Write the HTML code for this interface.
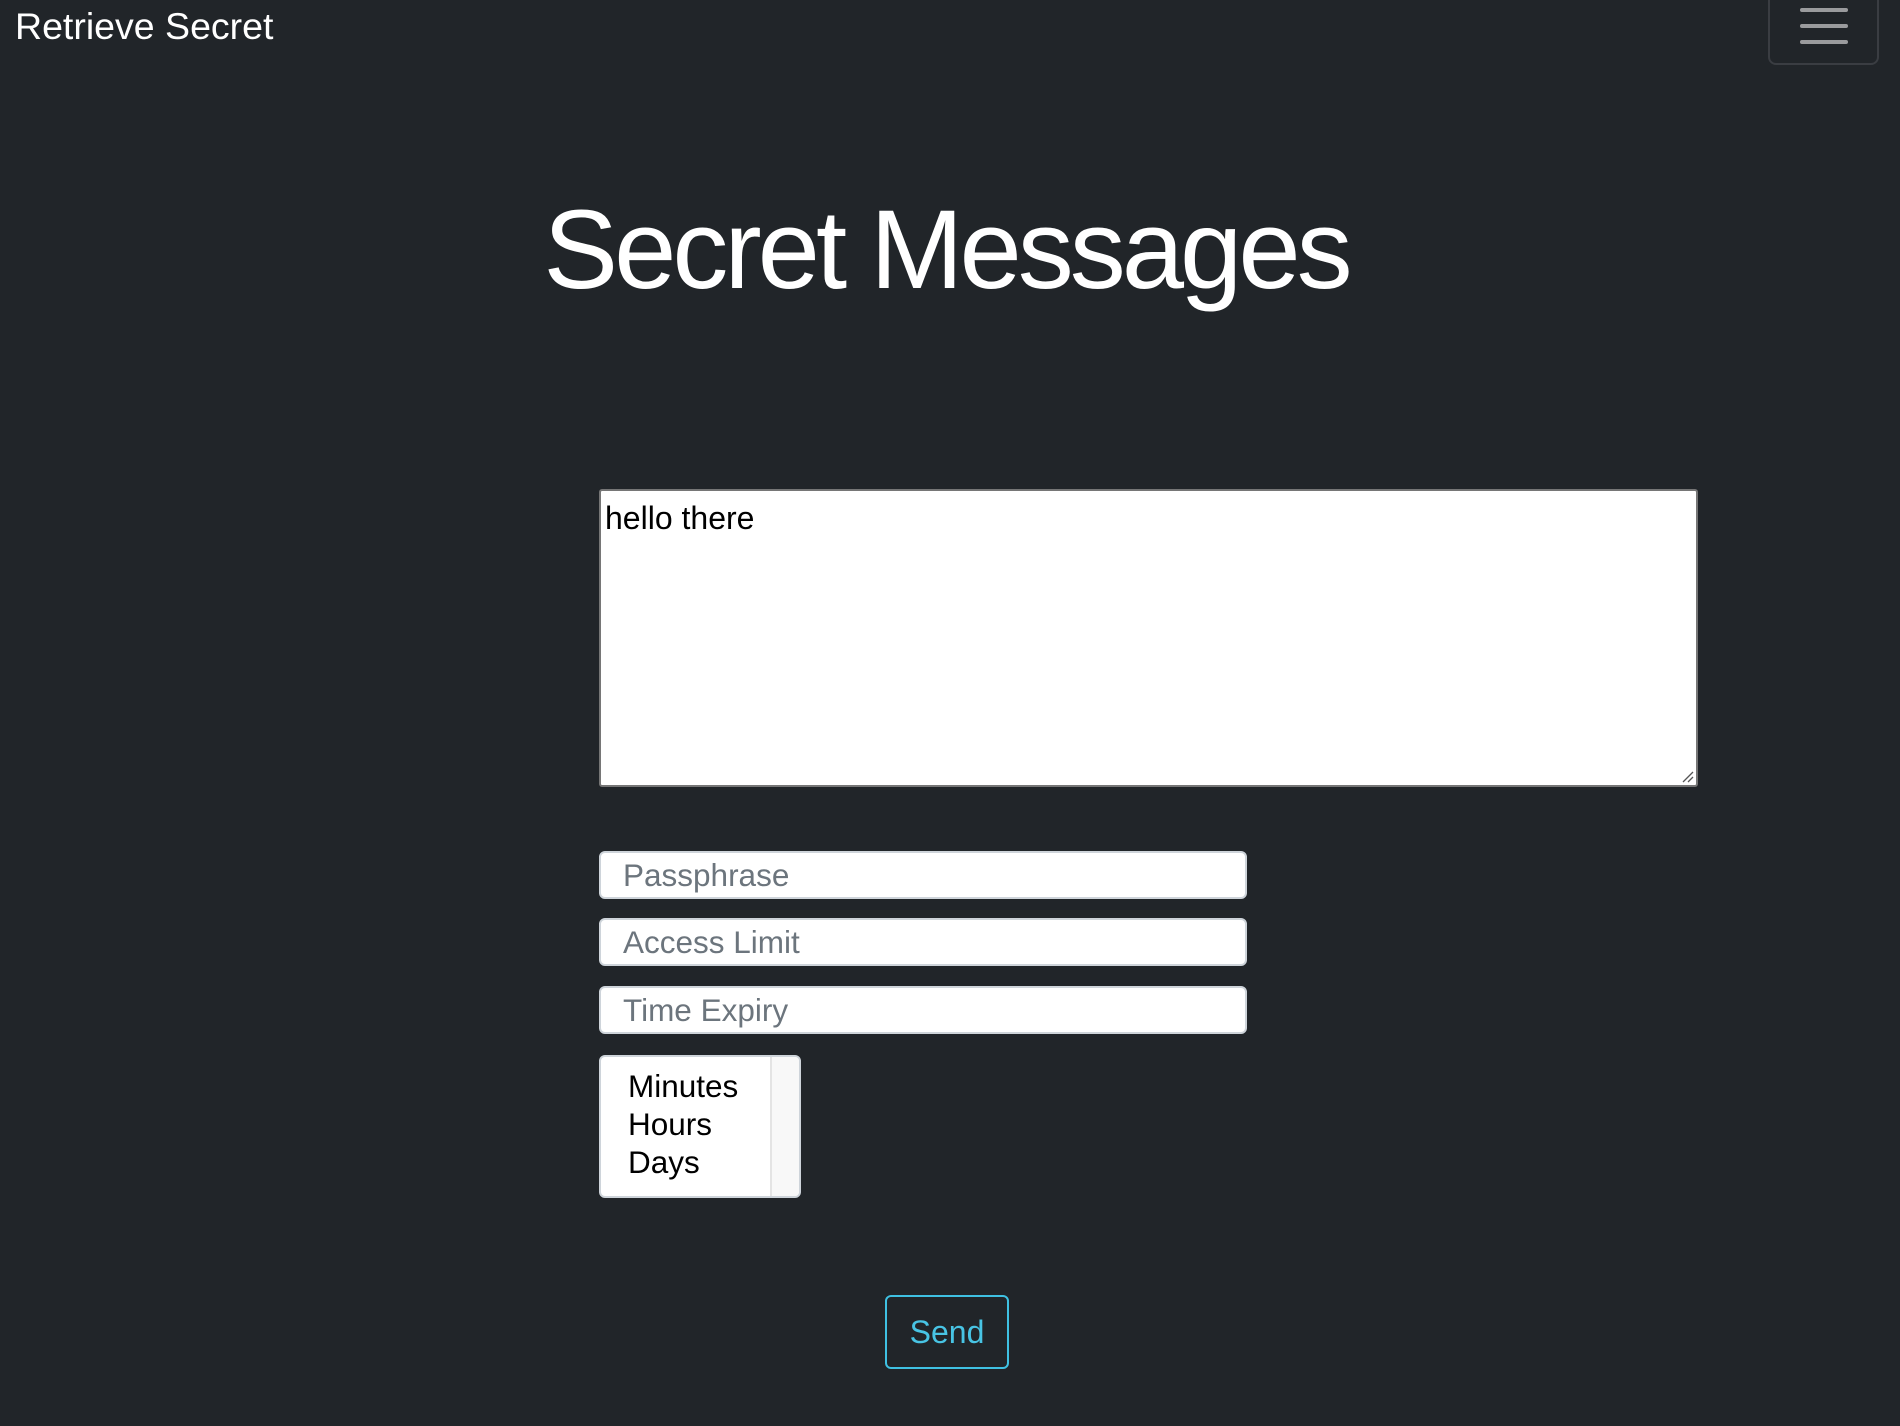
<!DOCTYPE html>
<html><head><meta charset="utf-8"><style>
*{box-sizing:border-box;margin:0;padding:0}
html,body{width:1900px;height:1426px;background:#212529;overflow:hidden;font-family:"Liberation Sans",sans-serif}
.abs{position:absolute}
.brand{left:15px;top:2px;font-size:37.5px;color:#fff;line-height:48px;white-space:nowrap}
.tog{left:1768px;top:-10px;width:111px;height:75px;border:2px solid #3a3d42;border-radius:8px}
.bar{left:1800px;width:48px;height:4px;background:#9a9b9d;border-radius:2px}
.title{left:0;width:1892px;top:180px;text-align:center;font-size:112px;color:#fff;letter-spacing:-4px;line-height:140px;white-space:nowrap}
.ta{left:599px;top:489px;width:1099px;height:298px;background:#fff;border:2px solid #767676;border-radius:3px}
.ta span{position:absolute;left:4px;top:9px;font-size:32px;color:#000;line-height:36px}
.in{left:599px;width:648px;height:48px;background:#fff;border:2px solid #ced4da;border-radius:6px;font-size:31.5px;color:#6c757d;padding-left:22px;line-height:45px;white-space:nowrap}
.sel{left:599px;top:1055px;width:202px;height:143px;background:#fff;border:2px solid #ced4da;border-radius:6px;overflow:hidden}
.sel .sb{position:absolute;right:0;top:0;width:29px;height:100%;background:#f8f8f8;border-left:2px solid #e4e4e4}
.sel div.o{position:absolute;left:27px;font-size:31.5px;color:#000;line-height:38px}
.send{left:885px;top:1295px;width:124px;height:74px;border:2px solid #3fc1e2;border-radius:6px;color:#48c4e4;font-size:32px;text-align:center;line-height:70px}
</style></head><body>
<div class="abs brand">Retrieve Secret</div>
<div class="abs tog"></div>
<div class="abs bar" style="top:8px"></div>
<div class="abs bar" style="top:24px"></div>
<div class="abs bar" style="top:40px"></div>
<div class="abs title">Secret Messages</div>
<div class="abs ta"><span>hello there</span>
<svg style="position:absolute;right:2px;bottom:2px" width="14" height="14"><path d="M3 13L13 3M8 13L13 8" stroke="#555" stroke-width="1.3"/></svg></div>
<div class="abs in" style="top:851px">Passphrase</div>
<div class="abs in" style="top:918px">Access Limit</div>
<div class="abs in" style="top:986px">Time Expiry</div>
<div class="abs sel"><div class="sb"></div>
<div class="o" style="top:10px">Minutes</div>
<div class="o" style="top:48px">Hours</div>
<div class="o" style="top:86px">Days</div></div>
<div class="abs send">Send</div>
</body></html>
